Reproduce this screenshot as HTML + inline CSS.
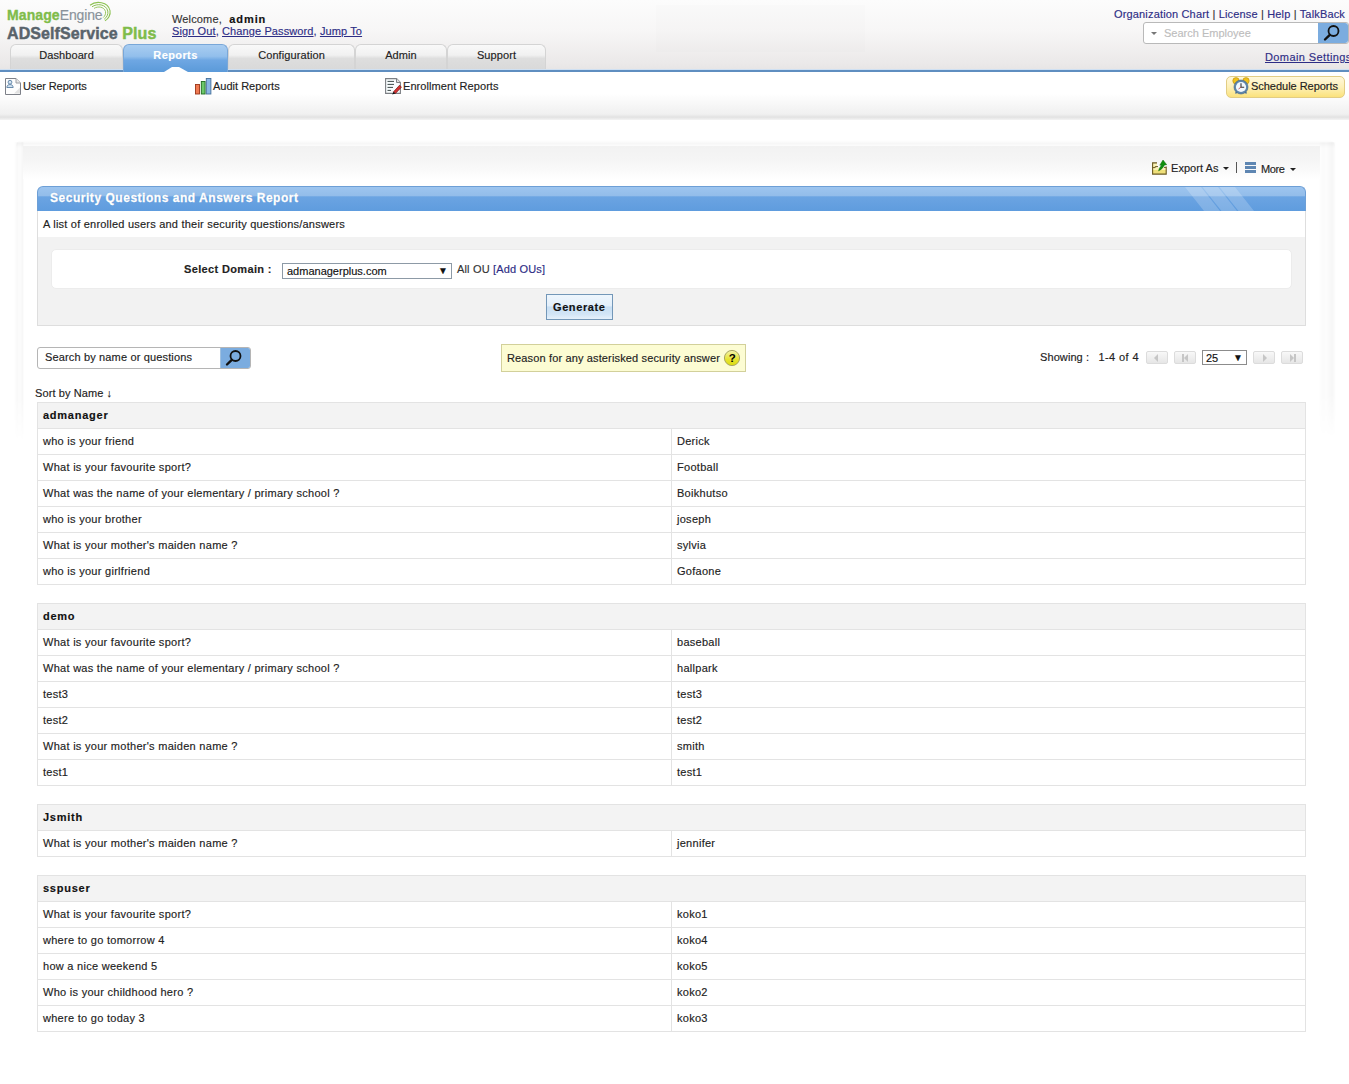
<!DOCTYPE html>
<html><head><meta charset="utf-8">
<style>
*{box-sizing:border-box;margin:0;padding:0}
html,body{width:1349px;height:1084px;overflow:hidden;background:#fff}
body{position:relative;font-family:"Liberation Sans",sans-serif;font-size:11px;color:#222;-webkit-text-stroke:.15px currentColor}
.a{position:absolute;white-space:nowrap}
#hdr{position:absolute;left:0;top:0;width:1349px;height:70px;background:linear-gradient(#fcfcfc,#f7f6f6 45%,#ebe9e9 90%,#e7e5e5)}
#bline{position:absolute;left:0;top:69px;width:1349px;height:3px;background:#5f8ec0;border-top:1px solid #cfe0f2}
.tab{position:absolute;top:44px;height:25px;border:1px solid #d4d4d4;border-bottom:none;border-radius:6px 6px 0 0;
 background:linear-gradient(#f9f9f9,#f1f1f1 42%,#dedede 56%,#d9d9d9);text-align:center;line-height:21px;color:#222;letter-spacing:.1px}
.tab.on{height:28px;z-index:2;background:linear-gradient(#a9cdf1,#92bfec 42%,#6ea7e3 56%,#5b9ad9);border-color:#79a7d8;color:#fff;font-weight:bold;letter-spacing:.4px}
#sub{position:absolute;left:0;top:72px;width:1349px;height:48px;background:linear-gradient(#fff,#fff 45%,#f0f0f0 88%,#e2e2e2 94%,#f4f4f4)}
a,.lnk{color:#2d2d85}
.u{text-decoration:underline}

.pg{top:351px;width:22px;height:13px;border:1px solid #dcdcdc;border-radius:2px;background:linear-gradient(#f8f8f8,#e6e6e6)}
.pg i{position:absolute;top:2px;width:0;height:0}
.pg b{position:absolute;top:2px;width:2px;height:8px;background:#c6c6c6}
table.t{width:1269px;border-collapse:collapse;table-layout:fixed;margin-bottom:18px}
table.t td{height:26px;border:1px solid #e3e3e3;padding:0 0 1px 5px;background:#fff;line-height:12px;letter-spacing:.28px;color:#222;white-space:nowrap;vertical-align:middle}
table.t td:first-child{width:634px}
table.t tr.h td{background:#f3f3f3;font-weight:bold;letter-spacing:.75px;color:#111}
</style></head>
<body>
<div id="hdr"></div>
<div class="a" style="left:656px;top:5px;width:209px;height:47px;background:rgba(0,0,0,.008)"></div>

<!-- logo -->
<svg class="a" style="left:0;top:0" width="120" height="30" viewBox="0 0 120 30">
 <path d="M90 5.2 C96 0.5 108 1.5 110 10.5 C111 15 108 19 105 20.8" fill="none" stroke="#8cc252" stroke-width="1.1"/>
 <path d="M92 6.8 C97 3.2 106 4 107.8 11 C108.5 14.5 106.5 17.5 104.2 19.2" fill="none" stroke="#8cc252" stroke-width="1"/>
 <path d="M94 8.4 C98 6 104 6.5 105.5 11.5 C106 14 104.8 16.2 103.2 17.6" fill="none" stroke="#8cc252" stroke-width=".9"/>
</svg>
<div class="a" style="left:7px;top:8px;font-size:14px;line-height:14px"><span style="color:#7fbc4a;font-weight:bold;letter-spacing:.1px;-webkit-text-stroke:.35px #7fbc4a">Manage</span><span style="color:#89929a;letter-spacing:-.15px">Engine</span></div>
<div class="a" style="left:7px;top:26px;font-size:16px;font-weight:bold;letter-spacing:.1px;line-height:16px;-webkit-text-stroke:.45px currentColor"><span style="color:#59636b">ADSelfService</span> <span style="color:#7fbc4a">Plus</span></div>

<div class="a" style="left:172px;top:13px;line-height:12px;letter-spacing:.15px;color:#333">Welcome, &nbsp;<b style="color:#111;letter-spacing:.9px;margin-left:1px">admin</b></div>
<div class="a lnk" style="left:172px;top:25px;line-height:12px;letter-spacing:.11px"><span class="u">Sign Out</span>, <span class="u">Change Password</span>, <span class="u">Jump To</span></div>

<div class="a lnk" style="left:1114px;top:8px;line-height:12px;letter-spacing:.16px">Organization Chart <span style="color:#333">|</span> License <span style="color:#333">|</span> Help <span style="color:#333">|</span> TalkBack</div>
<div class="a" style="left:1143px;top:22px;width:206px;height:22px;border:1px solid #b9b9b9;border-radius:3px;background:#fff"></div>
<div class="a" style="left:1318px;top:23px;width:30px;height:20px;background:#7bacdf;border-radius:0 3px 3px 0"></div>
<svg class="a" style="left:1322px;top:24px" width="20" height="18" viewBox="0 0 20 18"><circle cx="11.5" cy="7" r="5" fill="none" stroke="#111" stroke-width="1.8"/><path d="M7.8 10.8 L3 15.5" stroke="#111" stroke-width="2.4" stroke-linecap="round"/></svg>
<div class="a" style="left:1151px;top:32px;width:0;height:0;border-left:3px solid transparent;border-right:3px solid transparent;border-top:3px solid #777"></div>
<div class="a" style="left:1164px;top:27px;line-height:12px;color:#bdbdbd;letter-spacing:0">Search Employee</div>
<div class="a lnk u" style="left:1265px;top:51px;line-height:12px;letter-spacing:.4px">Domain Settings</div>

<!-- tabs -->
<div class="tab" style="left:10px;width:113px">Dashboard</div>
<div class="tab on" style="left:123px;width:105px">Reports</div>
<div class="tab" style="left:228px;width:127px">Configuration</div>
<div class="tab" style="left:355px;width:92px">Admin</div>
<div class="tab" style="left:447px;width:99px">Support</div>
<div id="bline"></div>

<div id="sub"></div>
<div class="a" style="left:164px;top:67px;width:24px;height:5px;z-index:3;background:#fff;clip-path:polygon(0 100%,8px 0,15px 0,100% 100%)"></div>

<!-- sub nav -->
<svg class="a" style="left:5px;top:78px" width="17" height="17" viewBox="0 0 17 17">
 <path d="M0.5 0.5 H11 L15.5 5 V16.5 H0.5 Z" fill="#fdfdfd" stroke="#7d8088"/>
 <path d="M11 0.5 V5 H15.5" fill="#e8e8e8" stroke="#9a9ca2"/>
 <path d="M9 15.5 L15 9.5 V15.5 Z" fill="#e2e2e2"/>
 <circle cx="5" cy="4.2" r="1.9" fill="#d4e4f2" stroke="#5a7fa3" stroke-width=".9"/>
 <path d="M1.8 9.5 C2 7.2 3.3 6.6 5 6.6 C6.7 6.6 8 7.2 8.2 9.5 Z" fill="#d4e4f2" stroke="#5a7fa3" stroke-width=".9"/>
</svg>
<div class="a" style="left:23px;top:80px;line-height:12px;letter-spacing:-.1px;color:#222">User Reports</div>
<svg class="a" style="left:195px;top:78px" width="17" height="17" viewBox="0 0 17 17">
 <rect x="0.5" y="6.5" width="4" height="9.5" fill="#f07a52" stroke="#9a3418" stroke-width=".9"/>
 <rect x="6.3" y="3.5" width="3.8" height="12.5" fill="#6cc86a" stroke="#1d6a1d" stroke-width=".9"/>
 <rect x="11.3" y="0.5" width="4.6" height="15.5" fill="#8ab6e4" stroke="#46709a" stroke-width=".9"/>
</svg>
<div class="a" style="left:213px;top:80px;line-height:12px;letter-spacing:0;color:#222">Audit Reports</div>
<svg class="a" style="left:385px;top:78px" width="17" height="17" viewBox="0 0 17 17">
 <path d="M0.6 0.6 H11.5 L15.4 4.5 V15.4 H0.6 Z" fill="#f8fcfd" stroke="#7c7f84" stroke-width="1.1"/>
 <path d="M11.5 0.6 V4.5 H15.4" fill="#e0e0e0" stroke="#7c7f84" stroke-width="1"/>
 <path d="M2.5 3.4h6.5M2.5 6.4h6.5M2.5 9.4h5.5M2.5 12.4h3.5" stroke="#3e4a4a" stroke-width="1"/>
 <path d="M8.5 13.8 L14.6 7.2 L16.4 9.2 L10.3 15.6 Z" fill="#d23232" stroke="#7a1010" stroke-width=".7"/>
 <path d="M8.5 13.8 L10.3 15.6 L7.2 16.6 Z" fill="#111"/>
</svg>
<div class="a" style="left:403px;top:80px;line-height:12px;letter-spacing:.08px;color:#222">Enrollment Reports</div>

<div class="a" style="left:1226px;top:76px;width:119px;height:22px;border:1px solid #e2cd84;border-radius:5px;background:linear-gradient(#fff8dc,#fdf0b8 50%,#fbe27c)"></div>
<svg class="a" style="left:1232px;top:77px" width="18" height="18" viewBox="0 0 18 18">
 <circle cx="4" cy="3.8" r="3.2" fill="#f2c21a" stroke="#b98e12" stroke-width=".6"/>
 <circle cx="14" cy="3.8" r="3.2" fill="#f2c21a" stroke="#b98e12" stroke-width=".6"/>
 <path d="M3.5 16.5 L5 14.5 M14.5 16.5 L13 14.5" stroke="#4f7497" stroke-width="1.4"/>
 <circle cx="9" cy="10" r="7" fill="#5e86ab" stroke="#3f6284" stroke-width=".6"/>
 <circle cx="9" cy="10" r="5.1" fill="#f2f8fd"/>
 <path d="M9 6.2 V10.2 H12.2" fill="none" stroke="#333" stroke-width="1.1"/>
 <path d="M9 10.2 L6.5 12" stroke="#b33" stroke-width=".8"/>
</svg>
<div class="a" style="left:1251px;top:80px;line-height:12px;letter-spacing:-.03px;color:#222">Schedule Reports</div>

<!-- outer panel -->
<div class="a" style="left:14px;top:142px;width:10px;height:300px;background:linear-gradient(to right,rgba(0,0,0,0),rgba(0,0,0,.025) 30%,rgba(0,0,0,.012) 60%,rgba(0,0,0,.03) 85%,rgba(0,0,0,0));-webkit-mask-image:linear-gradient(#000 85%,transparent)"></div>
<div class="a" style="left:1318px;top:142px;width:18px;height:296px;background:linear-gradient(to right,rgba(0,0,0,0),rgba(0,0,0,.015) 25%,rgba(0,0,0,.01) 50%,rgba(0,0,0,.035) 78%,rgba(0,0,0,.02) 90%,rgba(0,0,0,0));-webkit-mask-image:linear-gradient(#000 85%,transparent)"></div>
<div class="a" style="left:16px;top:140px;width:1319px;height:8px;border-radius:6px 6px 0 0;background:linear-gradient(rgba(0,0,0,0),rgba(0,0,0,.03) 45%,rgba(0,0,0,.015) 70%,rgba(0,0,0,0))"></div>
<div class="a" style="left:23px;top:146px;width:1297px;height:33px;background:linear-gradient(#f2f2f2,#f5f5f5 40%,#fafafa 75%,#fff)"></div>


<!-- export / more -->
<svg class="a" style="left:1151px;top:159px" width="17" height="17" viewBox="0 0 17 17">
 <path d="M1.6 3.9 H6 V8.8 H15.2 V15.1 H1.6 Z" fill="#fbf3b8"/>
 <rect x="1.6" y="11" width="13.6" height="4" fill="#efe07a"/>
 <path d="M6 3.9 H1.6 V15.1 H15.2 V7.6" fill="none" stroke="#6b5a22" stroke-width="1.1"/>
 <path d="M1.6 8.6 H4.2 V7.6 H7" fill="none" stroke="#6b5a22" stroke-width="1"/>
 <path d="M13 8.4 H15.2" stroke="#6b5a22" stroke-width="1"/>
 <path d="M7.6 11.8 C8 9.5 9.3 7.8 10.6 6.3 L8.8 6.2 L12 1 L15.7 5.7 L13.5 5.9 C12.5 8 10.8 10.4 7.6 11.8 Z" fill="#0f8f0f" stroke="#0a6a0a" stroke-width=".5"/>
</svg>
<div class="a" style="left:1171px;top:162px;line-height:12px;letter-spacing:.05px;color:#222">Export As</div>
<div class="a" style="left:1223px;top:167px;width:0;height:0;border-left:3px solid transparent;border-right:3px solid transparent;border-top:3px solid #222"></div>
<div class="a" style="left:1236px;top:162px;width:1px;height:11px;background:#555"></div>
<svg class="a" style="left:1245px;top:162px" width="11" height="11" viewBox="0 0 11 11">
 <rect x="0" y="0" width="11" height="3" fill="#5e86b2"/><rect x="0" y="4" width="11" height="3" fill="#5e86b2"/><rect x="0" y="8" width="11" height="3" fill="#5e86b2"/>
</svg>
<div class="a" style="left:1261px;top:163px;line-height:12px;letter-spacing:-.4px;color:#222">More</div>
<div class="a" style="left:1290px;top:168px;width:0;height:0;border-left:3px solid transparent;border-right:3px solid transparent;border-top:3px solid #222"></div>

<!-- report header -->
<div class="a" style="left:37px;top:186px;width:1269px;height:25px;border:1px solid #6d9fd6;border-bottom:none;border-radius:6px 6px 0 0;overflow:hidden;background:linear-gradient(#9dc5ef,#93bdea 36%,#6ba4e2 41%,#5f9cde)">
 <svg style="position:absolute;left:1145px;top:0" width="80" height="25" viewBox="0 0 80 25"><path d="M2 0 H18 L37 24 H21 Z M19.5 0 H35 L54 24 H38.5 Z M36.5 0 H52 L71 24 H55.5 Z" fill="#fff" fill-opacity=".2"/></svg>
</div>
<div class="a" style="left:50px;top:191px;font-size:12px;line-height:14px;font-weight:bold;color:#fff;letter-spacing:.53px;-webkit-text-stroke:.3px #fff;text-shadow:0 0 1px rgba(30,70,130,.35)">Security Questions and Answers Report</div>
<div class="a" style="left:37px;top:211px;width:1269px;height:115px;border:1px solid #dedede;border-top:none;background:#f2f2f2"></div>
<div class="a" style="left:38px;top:211px;width:1267px;height:26px;background:#fff"></div>
<div class="a" style="left:43px;top:218px;line-height:12px;letter-spacing:.22px;color:#222">A list of enrolled users and their security questions/answers</div>
<div class="a" style="left:51px;top:249px;width:1241px;height:40px;background:#fff;border:1px solid #ececec;border-radius:5px"></div>
<div class="a" style="left:184px;top:263px;line-height:12px;font-weight:bold;letter-spacing:.35px;color:#222">Select Domain :</div>
<div class="a" style="left:282px;top:263px;width:170px;height:16px;border:1px solid #8d9aa6;background:#fff"></div>
<div class="a" style="left:287px;top:265px;line-height:12px;color:#111">admanagerplus.com</div>
<div class="a" style="left:438px;top:266px;font-size:10px;line-height:10px;color:#111">&#9660;</div>
<div class="a" style="left:457px;top:263px;line-height:12px;letter-spacing:.16px;color:#333">All OU <span class="lnk">[Add OUs]</span></div>
<div class="a" style="left:546px;top:294px;width:67px;height:26px;border:1px solid #7397b8;background:linear-gradient(#eef6fd,#e3effa 45%,#c9dff3 50%,#d2e5f6 80%,#e6f1fb)"></div>
<div class="a" style="left:553px;top:301px;line-height:12px;font-weight:bold;letter-spacing:.6px;color:#111">Generate</div>

<!-- search / tip / pagination -->
<div class="a" style="left:37px;top:347px;width:214px;height:22px;border:1px solid #b5b5b5;border-radius:3px;background:#fff"></div>
<div class="a" style="left:220px;top:348px;width:30px;height:20px;background:#7bacdf;border-left:1px solid #9fc0e0;border-radius:0 2px 2px 0"></div>
<svg class="a" style="left:224px;top:349px" width="20" height="18" viewBox="0 0 20 18"><circle cx="11.5" cy="7" r="5" fill="none" stroke="#111" stroke-width="1.8"/><path d="M7.8 10.8 L3 15.5" stroke="#111" stroke-width="2.4" stroke-linecap="round"/></svg>
<div class="a" style="left:45px;top:351px;line-height:12px;letter-spacing:.15px;color:#222">Search by name or questions</div>

<div class="a" style="left:501px;top:344px;width:245px;height:28px;border:1px solid #d2d09a;background:#fcfcd3"></div>
<div class="a" style="left:507px;top:352px;line-height:12px;letter-spacing:.14px;color:#222">Reason for any asterisked security answer</div>
<svg class="a" style="left:723px;top:349px" width="18" height="18" viewBox="0 0 18 18"><defs><linearGradient id="qg" x1="0" y1="0" x2="0" y2="1"><stop offset="0" stop-color="#f4f3b0"/><stop offset=".6" stop-color="#e6e430"/><stop offset="1" stop-color="#dcdc10"/></linearGradient></defs><circle cx="9" cy="9" r="7.6" fill="url(#qg)" stroke="#a9a660" stroke-width="1"/><text x="9.2" y="13.3" text-anchor="middle" font-family="Liberation Sans" font-weight="bold" font-size="11.5" fill="#000">?</text></svg>

<div class="a" style="left:1040px;top:351px;line-height:12px;letter-spacing:.09px;color:#222">Showing : &nbsp; <span style="letter-spacing:.38px">1-4 of 4</span></div>
<div class="a pg" style="left:1146px"><i style="border-right:4px solid #c6c6c6;border-top:4px solid transparent;border-bottom:4px solid transparent;left:7px"></i></div>
<div class="a pg" style="left:1174px"><b style="left:7px"></b><i style="border-right:4px solid #c6c6c6;border-top:4px solid transparent;border-bottom:4px solid transparent;left:9px"></i></div>
<div class="a" style="left:1202px;top:350px;width:45px;height:15px;border:1px solid #8c8c8c;background:#fff"></div>
<div class="a" style="left:1206px;top:352px;line-height:12px;color:#111">25</div>
<div class="a" style="left:1233px;top:353px;font-size:10px;line-height:10px;color:#111">&#9660;</div>
<div class="a pg" style="left:1253px"><i style="border-left:4px solid #c6c6c6;border-top:4px solid transparent;border-bottom:4px solid transparent;left:9px"></i></div>
<div class="a pg" style="left:1281px"><i style="border-left:4px solid #c6c6c6;border-top:4px solid transparent;border-bottom:4px solid transparent;left:8px"></i><b style="left:12px"></b></div>

<div class="a" style="left:35px;top:387px;line-height:12px;letter-spacing:.1px;color:#222">Sort by Name &#8595;</div>

<!-- tables -->
<div id="tables" class="a" style="left:37px;top:402px;width:1269px">
 <table class="t"><tr class="h"><td colspan="2">admanager</td></tr>
  <tr><td>who is your friend</td><td>Derick</td></tr>
  <tr><td>What is your favourite sport?</td><td>Football</td></tr>
  <tr><td>What was the name of your elementary / primary school ?</td><td>Boikhutso</td></tr>
  <tr><td>who is your brother</td><td>joseph</td></tr>
  <tr><td>What is your mother's maiden name ?</td><td>sylvia</td></tr>
  <tr><td>who is your girlfriend</td><td>Gofaone</td></tr>
 </table>
 <table class="t"><tr class="h"><td colspan="2">demo</td></tr>
  <tr><td>What is your favourite sport?</td><td>baseball</td></tr>
  <tr><td>What was the name of your elementary / primary school ?</td><td>hallpark</td></tr>
  <tr><td>test3</td><td>test3</td></tr>
  <tr><td>test2</td><td>test2</td></tr>
  <tr><td>What is your mother's maiden name ?</td><td>smith</td></tr>
  <tr><td>test1</td><td>test1</td></tr>
 </table>
 <table class="t"><tr class="h"><td colspan="2">Jsmith</td></tr>
  <tr><td>What is your mother's maiden name ?</td><td>jennifer</td></tr>
 </table>
 <table class="t"><tr class="h"><td colspan="2">sspuser</td></tr>
  <tr><td>What is your favourite sport?</td><td>koko1</td></tr>
  <tr><td>where to go tomorrow 4</td><td>koko4</td></tr>
  <tr><td>how a nice weekend 5</td><td>koko5</td></tr>
  <tr><td>Who is your childhood hero ?</td><td>koko2</td></tr>
  <tr><td>where to go today 3</td><td>koko3</td></tr>
 </table>
</div>

</body></html>
